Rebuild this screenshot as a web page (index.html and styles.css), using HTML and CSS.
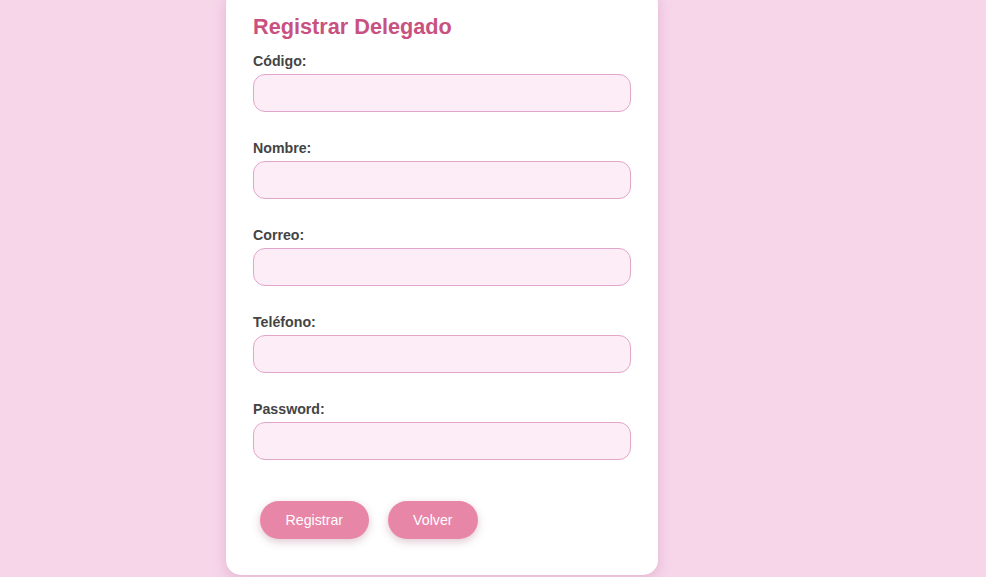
FILE: index.html
```html
<!DOCTYPE html>
<html lang="es">
<head>
<meta charset="utf-8">
<title>Registrar Delegado</title>
<link rel="stylesheet" href="styles.css">
</head>
<body>
<div class="card">
  <h2 class="title">Registrar Delegado</h2>
  <form class="form">
    <div class="field">
      <label class="label">Código:</label>
      <input class="input" type="text">
    </div>
    <div class="field">
      <label class="label">Nombre:</label>
      <input class="input" type="text">
    </div>
    <div class="field">
      <label class="label">Correo:</label>
      <input class="input" type="text">
    </div>
    <div class="field">
      <label class="label">Teléfono:</label>
      <input class="input" type="text">
    </div>
    <div class="field">
      <label class="label">Password:</label>
      <input class="input" type="password">
    </div>
    <div class="actions">
      <button class="btn" type="button">Registrar</button>
      <button class="btn" type="button">Volver</button>
    </div>
  </form>
</div>
</body>
</html>
```

FILE: styles.css
```css
html, body {
  margin: 0;
  padding: 0;
}
body {
  background: #f7d6ea;
  font-family: "Liberation Sans", Arial, sans-serif;
  display: flex;
  justify-content: flex-start;
  padding-left: 226px;
  overflow: hidden;
  height: 577px;
}
.card {
  box-sizing: border-box;
  width: 432px;
  margin-top: -11px;
  height: 586px;
  background: #ffffff;
  border-radius: 15px;
  padding: 24px 27px 36px;
  box-shadow: 0 4px 14px rgba(190, 120, 160, 0.35);
}
.title {
  margin: 0 0 12px;
  font-size: 21.7px;
  font-weight: bold;
  color: #c9517f;
  line-height: 28px;
}
.form {
  display: flex;
  flex-direction: column;
}
.field {
  display: flex;
  flex-direction: column;
  margin-bottom: 28px;
}
.label {
  font-size: 14.2px;
  font-weight: bold;
  color: #444444;
  line-height: 17px;
  margin-bottom: 4px;
}
.input {
  box-sizing: border-box;
  height: 38px;
  width: 100%;
  border: 1px solid #e2a6c9;
  border-radius: 12px;
  background: #fcedf6;
  outline: none;
}
.actions {
  display: flex;
  gap: 19px;
  margin-top: 13px;
  padding-left: 7px;
}
.btn {
  height: 38px;
  padding: 0 25.5px;
  border: none;
  border-radius: 19px;
  background: #e886a7;
  color: #ffffff;
  font-family: "Liberation Sans", Arial, sans-serif;
  font-size: 14.2px;
  box-shadow: 0 3px 8px rgba(150, 80, 110, 0.3);
}
```
